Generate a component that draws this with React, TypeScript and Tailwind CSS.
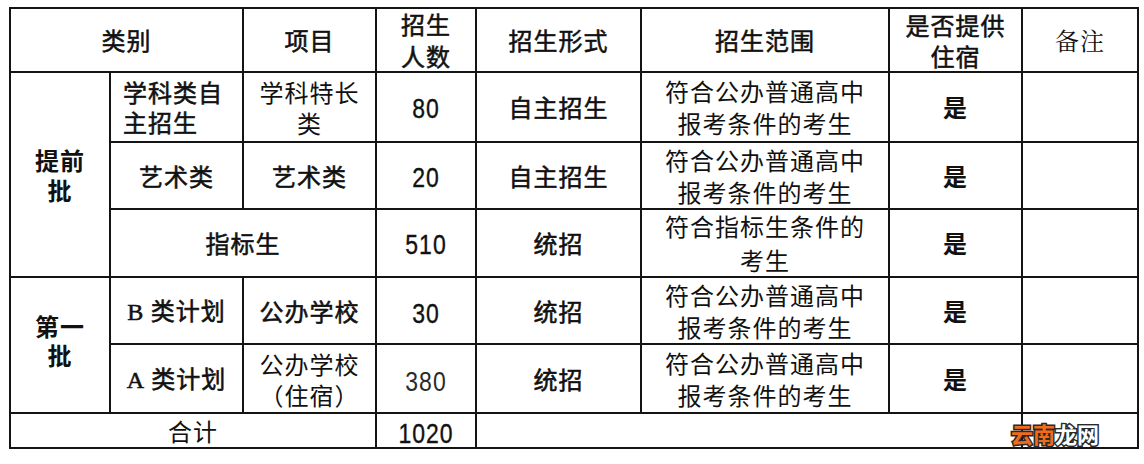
import React from "react";

const cjk = "font-['Noto_Sans_CJK_SC','Noto_Sans',sans-serif]";
const cell = "border-2 border-[#141414] text-center align-middle p-0";
const med = "font-normal [-webkit-text-stroke:0.55px_#111]";
const reg = "font-normal";
const bold = "font-bold";

function Num({ v, light }: { v: string; light?: boolean }) {
  return (
    <span
      className={`inline-block font-['Liberation_Sans',Arial,sans-serif] text-[23px] leading-none scale-y-[1.2] ${
        light ? "text-[#2a2a2a]" : "text-[#111] [-webkit-text-stroke:0.3px_#111]"
      }`}
    >
      {v}
    </span>
  );
}

function Two({
  a,
  b,
  gap = "leading-[32px]",
  left,
}: {
  a: React.ReactNode;
  b: React.ReactNode;
  gap?: string;
  left?: boolean;
}) {
  return (
    <div className={`h-[52px] flex flex-col justify-center ${left ? "items-start" : "items-center"} ${gap}`}>
      <div>{a}</div>
      <div>{b}</div>
    </div>
  );
}

const scope = <Two a="符合公办普通高中" b="报考条件的考生" />;

export default function App() {
  return (
    <div className="relative w-[1144px] h-[464px] bg-white overflow-hidden">
      <table
        className={`ml-[9px] mt-[7px] w-[1130px] table-fixed border-collapse border-2 border-[#141414] text-[#111] text-[24px] leading-[30px] tracking-[1px] ${cjk}`}
      >
        <colgroup>
          <col className="w-[100px]" />
          <col className="w-[133px]" />
          <col className="w-[133px]" />
          <col className="w-[100px]" />
          <col className="w-[165px]" />
          <col className="w-[248px]" />
          <col className="w-[133px]" />
          <col className="w-[116px]" />
        </colgroup>
        <thead>
          <tr className="h-[64px]">
            <th colSpan={2} className={`${cell} ${med}`}>类别</th>
            <th className={`${cell} ${med}`}>项目</th>
            <th className={`${cell} ${med}`}>
              <Two a="招生" b="人数" />
            </th>
            <th className={`${cell} ${med}`}>招生形式</th>
            <th className={`${cell} ${med}`}>招生范围</th>
            <th className={`${cell} ${med}`}>
              <Two a="是否提供" b="住宿" gap="leading-[31px]" />
            </th>
            <th className={`${cell} font-normal font-['Noto_Serif_CJK_SC','Noto_Sans_CJK_SC',serif]`}>备注</th>
          </tr>
        </thead>
        <tbody>
          <tr className="h-[70px]">
            <td rowSpan={3} className={`${cell} ${bold}`}>
              <Two a="提前" b="批" gap="leading-[30px]" />
            </td>
            <td className={`${cell} text-left pl-[12px] ${med}`}>
              <Two a="学科类自" b="主招生" gap="leading-[30px]" left />
            </td>
            <td className={`${cell} ${reg}`}>
              <Two a="学科特长" b="类" gap="leading-[31px]" />
            </td>
            <td className={cell}>
              <Num v="80" />
            </td>
            <td className={`${cell} ${med}`}>自主招生</td>
            <td className={`${cell} ${reg}`}>{scope}</td>
            <td className={`${cell} ${bold}`}>是</td>
            <td className={cell}></td>
          </tr>
          <tr className="h-[67px]">
            <td className={`${cell} ${med}`}>艺术类</td>
            <td className={`${cell} ${med}`}>艺术类</td>
            <td className={cell}>
              <Num v="20" />
            </td>
            <td className={`${cell} ${med}`}>自主招生</td>
            <td className={`${cell} ${reg}`}>{scope}</td>
            <td className={`${cell} ${bold}`}>是</td>
            <td className={cell}></td>
          </tr>
          <tr className="h-[68px]">
            <td colSpan={2} className={`${cell} ${med}`}>指标生</td>
            <td className={cell}>
              <Num v="510" />
            </td>
            <td className={`${cell} ${med}`}>统招</td>
            <td className={`${cell} ${reg}`}>
              <Two a="符合指标生条件的" b="考生" gap="leading-[34px]" />
            </td>
            <td className={`${cell} ${bold}`}>是</td>
            <td className={cell}></td>
          </tr>
          <tr className="h-[67px]">
            <td rowSpan={2} className={`${cell} ${bold} pb-[10px]`}>
              <Two a="第一" b="批" gap="leading-[29px]" />
            </td>
            <td className={`${cell} ${med}`}>
              <span className="font-['Liberation_Serif',serif]">B</span> 类计划
            </td>
            <td className={`${cell} ${med}`}>公办学校</td>
            <td className={cell}>
              <Num v="30" />
            </td>
            <td className={`${cell} ${med}`}>统招</td>
            <td className={`${cell} ${reg}`}>{scope}</td>
            <td className={`${cell} ${bold}`}>是</td>
            <td className={cell}></td>
          </tr>
          <tr className="h-[69px]">
            <td className={`${cell} ${med}`}>
              <span className="font-['Liberation_Serif',serif]">A</span> 类计划
            </td>
            <td className={`${cell} ${reg}`}>
              <Two a="公办学校" b="（住宿）" gap="leading-[31px]" />
            </td>
            <td className={cell}>
              <Num v="380" light />
            </td>
            <td className={`${cell} ${med}`}>统招</td>
            <td className={`${cell} ${reg}`}>{scope}</td>
            <td className={`${cell} ${bold}`}>是</td>
            <td className={cell}></td>
          </tr>
          <tr className="h-[35px]">
            <td colSpan={3} className={`${cell} ${reg}`}>合计</td>
            <td className={cell}>
              <Num v="1020" />
            </td>
            <td colSpan={3} className={cell}></td>
            <td className={cell}></td>
          </tr>
        </tbody>
      </table>
      <div
        className={`absolute left-[1011px] top-[421px] text-[22px] leading-[24px] font-bold tracking-[0px] ${cjk} [-webkit-text-stroke:3px_#2a2a2a] [paint-order:stroke_fill]`}
      >
        <span className="text-[#f26a1b]">云南</span>
        <span className="text-white">龙网</span>
      </div>
    </div>
  );
}
